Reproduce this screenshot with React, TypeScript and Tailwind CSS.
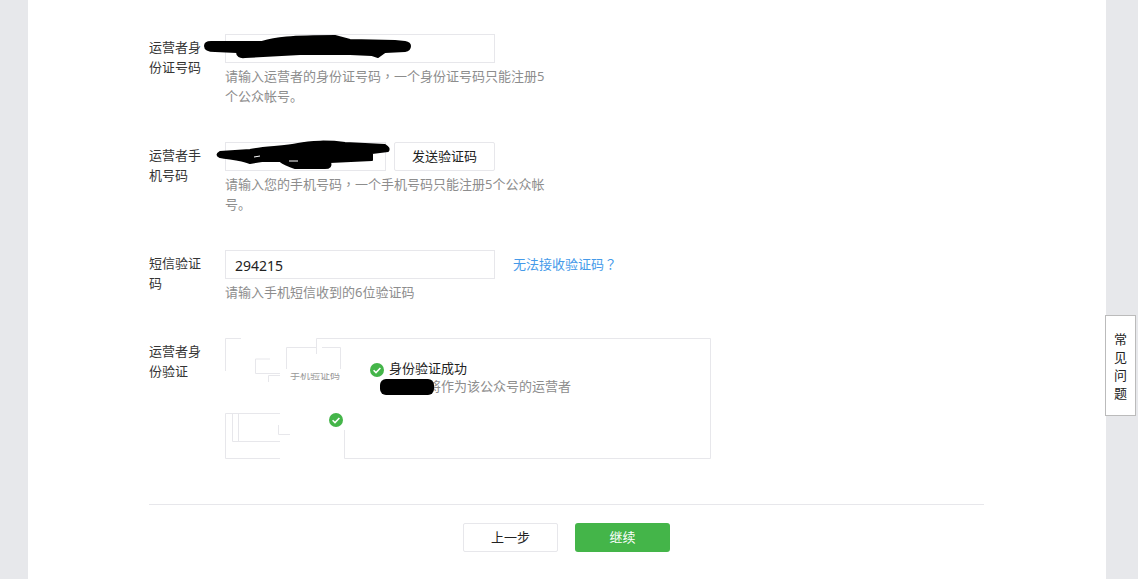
function CheckIcon({ className }: { className: string }) {
  return (
    <svg className={className} viewBox="0 0 14 14">
      <circle cx="7" cy="7" r="7" fill="#44b549" />
      <path d="M3.6 7.2l2.4 2.4 4.4-4.6" fill="none" stroke="#fff" strokeWidth="1.5" />
    </svg>
  )
}

// centered full width punctuation, as in the screenshot
function Punct({ children }: { children: string }) {
  return <span className="font-['Noto_Sans_CJK_TC',sans-serif]">{children}</span>
}

function Row({ label, help, children }: { label: string; help?: React.ReactNode; children: React.ReactNode }) {
  return (
    <div className="relative flex mb-[36px]">
      <div className="w-[56px] mr-[20px] pt-[3px] text-[13px] leading-[20px] text-[#353535] shrink-0">{label}</div>
      <div>
        <div className="flex items-center">{children}</div>
        {help && <p className="w-[320px] mt-[3px] text-[13px] leading-[20px] text-[#8d8d8d]">{help}</p>}
      </div>
    </div>
  )
}

// broken outline of the half loaded verification box
function BoxLines() {
  return (
    <svg className="absolute left-0 top-0 w-[487px] h-[121px]" viewBox="225 338 487 121" fill="none" stroke="#e7e7eb">
      <path d="M241 338.5H225.5V371" />
      <path d="M316.5 354V338.5H710.5V458.5H344.5V430" />
      <path d="M255.5 359V373.5H280M268.5 382V375.5H280M255.5 359H270" />
      <path d="M286.5 373V347.5H316M322 347.5H340.5V373" />
      <path d="M280 458.5H225.5V413.5H280M232.5 413.5V441.5H280M238.5 413V441.5M278.5 425V434.5H290" />
    </svg>
  )
}

export default function App() {
  return (
    <div className="h-[579px] overflow-hidden bg-[#e7e8eb] relative font-['Noto_Sans','Noto_Sans_CJK_SC',sans-serif]">
      <div className="ml-[28px] w-[1078px] h-[579px] bg-white pt-[34px] pl-[121px]">
        <Row
          label="运营者身份证号码"
          help={<>请输入运营者的身份证号码<Punct>，</Punct>一个身份证号码只能注册5个公众帐号。</>}
        >
          <div className="w-[270px] h-[29px] border border-[#e7e7eb]" />
          <svg className="absolute left-[55px] top-0 w-[207px] h-[25px] overflow-visible" viewBox="204 34 207 25" stroke="#000" strokeWidth="2" strokeLinejoin="round">
            <path d="M211 42L262 42C275 38 290 36 335 36L350 40L395 41L405 42Q410 43 410 46Q410 50 405 51L385 52L378 57L372 55L350 54L300 54L245 57Q237 58 237 52L215 51Q205 51 205 46Q205 42 211 42Z" />
          </svg>
        </Row>
        <Row
          label="运营者手机号码"
          help={<>请输入您的手机号码<Punct>，</Punct>一个手机号码只能注册5个公众帐号。</>}
        >
          <div className="w-[161px] h-[29px] border border-[#e7e7eb]" />
          <button className="ml-[8px] w-[101px] h-[29px] border border-[#e7e7eb] rounded-[2px] text-[13px] text-[#222]">发送验证码</button>
          <svg className="absolute left-[65px] top-[-2px] w-[177px] h-[30px] overflow-visible" viewBox="214 140 177 30" stroke="#000" strokeWidth="2" strokeLinejoin="round">
            <path d="M220 152L250 150C265 147 285 147 298 144C310 141 330 141 345 143L385 145Q390 148 388 151L372 153L372 160L330 162Q332 168 325 168L295 168Q285 165 280 161L262 161L250 163C240 159 230 159 220 157Q215 155 220 152Z" />
            <path d="M254 157L260 156M289 161L298 161" stroke="#fff" strokeWidth="1" />
          </svg>
        </Row>
        <Row label="短信验证码" help="请输入手机短信收到的6位验证码">
          <div className="w-[270px] h-[29px] border border-[#e7e7eb] pl-[9px] text-[14px] leading-[29px] text-[#222]">294215</div>
          <a className="ml-[18px] text-[13px] text-[#459ae9]">无法接收验证码<Punct>？</Punct></a>
        </Row>
        <div className="relative flex">
          <div className="w-[56px] mr-[20px] pt-[3px] text-[13px] leading-[20px] text-[#353535] shrink-0">运营者身份验证</div>
          <div className="relative w-[487px] h-[121px] pl-[145px] pt-[21px]">
            <BoxLines />
            <div className="flex">
              <CheckIcon className="w-[14px] h-[14px] mt-[4px] mr-[5px]" />
              <div className="text-[13px] leading-[18px]">
                <div className="text-[#222]">身份验证成功</div>
                <div className="text-[#8d8d8d] pl-[39px]">将作为该公众号的运营者</div>
              </div>
            </div>
            <span className="absolute left-[65px] top-[32px] text-[10px] leading-[10px] text-[#999]">手机验证码</span>
            <div className="absolute left-[60px] top-[31px] w-[60px] h-[4px] bg-white" />
            <CheckIcon className="absolute left-[104px] top-[75px] w-[14px] h-[14px]" />
            <div className="absolute left-[155px] top-[41px] w-[54px] h-[16px] rounded-[6px] bg-black" />
          </div>
        </div>
        <div className="w-[835px] mt-[45px] border-t border-[#e7e7eb] flex justify-center gap-[17px] pt-[18px]">
          <button className="w-[95px] h-[29px] border border-[#e7e7eb] rounded-[2px] text-[13px] text-[#222]">上一步</button>
          <button className="w-[95px] h-[29px] rounded-[3px] bg-[#44b549] text-[13px] text-white">继续</button>
        </div>
      </div>
      <div className="absolute left-[1105px] top-[315px] w-[31px] h-[101px] bg-white border border-[#bbb] flex flex-col items-center justify-center text-[13px] leading-[18px] text-[#222]">
        <span>常</span>
        <span>见</span>
        <span>问</span>
        <span>题</span>
      </div>
    </div>
  )
}
